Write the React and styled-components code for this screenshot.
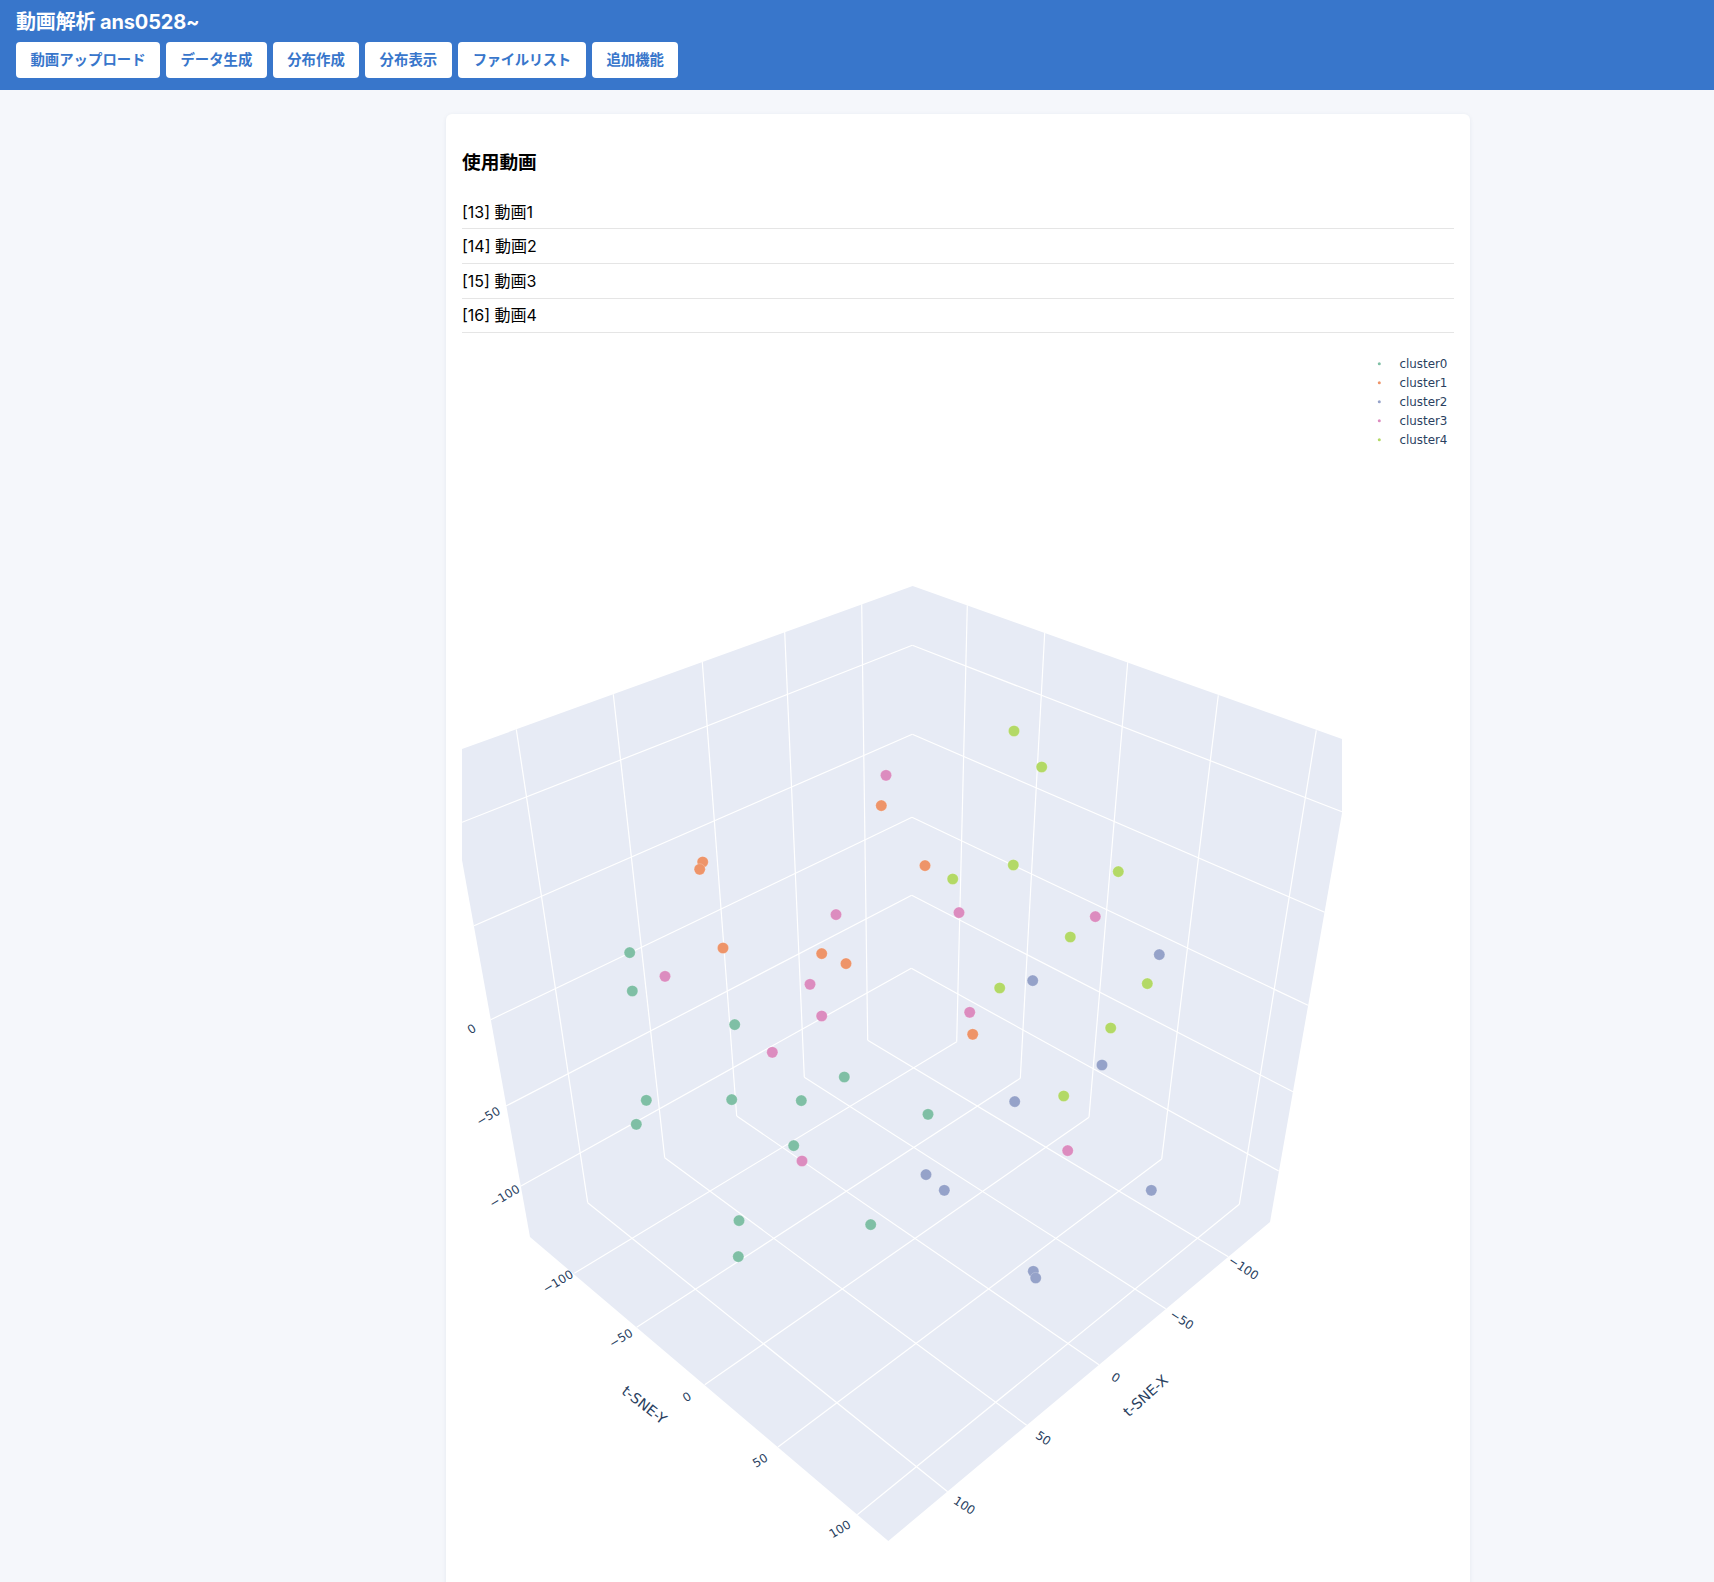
import React from "react";
import styled, { createGlobalStyle } from "styled-components";

const GlobalStyle = createGlobalStyle`
  html, body { margin: 0; padding: 0; background: #f5f7fb; }
  body { font-family: Inter, "Noto Sans CJK JP", sans-serif; }
`;

const Page = styled.div`
  height: 1582px;
  overflow: hidden;
  background: #f5f7fb;
`;
const Header = styled.header`
  height: 90px;
  box-sizing: border-box;
  padding: 9px 16px 0;
  background: #3876cb;
  color: #fff;
`;
const Title = styled.h1`
  margin: 0 0 6px;
  height: 27px;
  font-size: 20px;
  line-height: 27px;
  font-weight: 700;
  letter-spacing: -0.15px;
`;
const Nav = styled.nav`
  display: flex;
  gap: 6px;
`;
const NavButton = styled.button`
  height: 36px;
  width: ${(p) => p.$w}px;
  padding: 0 0 4px;
  border: 0;
  border-radius: 4px;
  background: #fff;
  color: #3876cb;
  font-family: inherit;
  font-size: 14.4px;
  font-weight: 700;
  letter-spacing: ${(p) => p.$ls || 0}px;
  white-space: nowrap;
`;
const Main = styled.main`
  padding: 24px 244px 0 446px;
`;
const Card = styled.section`
  box-sizing: border-box;
  padding: 0 16px 16px;
  background: #fff;
  border-radius: 6px;
  box-shadow: 0 1px 4px rgba(40, 60, 100, 0.08);
  display: flow-root;
`;
const Heading = styled.h3`
  margin: 34.7px 0 19.1px;
  font-size: 18.72px;
  line-height: 27px;
  font-weight: 700;
  color: #000;
`;
const VideoList = styled.ul`
  list-style: none;
  margin: 0;
  padding: 0;
`;
const VideoRow = styled.li`
  box-sizing: border-box;
  height: 34.6px;
  line-height: 24px;
  padding-top: 4.8px;
  font-size: 16px;
  color: #000;
  border-bottom: 1px solid #e5e5e5;
`;
const Plot = styled.svg`
  display: block;
  width: 992px;
  height: 1260px;
`;
const Tick = styled.text`
  font-family: "DejaVu Sans", Verdana, sans-serif;
  font-size: 12px;
  fill: #2a3f5f;
  text-anchor: middle;
  dominant-baseline: central;
`;
const AxisTitle = styled(Tick)`
  font-size: 14.4px;
`;
const LegendText = styled.text`
  font-family: "DejaVu Sans", Verdana, sans-serif;
  font-size: 11.9px;
  fill: #2a3f5f;
  dominant-baseline: central;
`;
const GridLine = styled.line`
  stroke: #fff;
  stroke-width: 1.2;
`;
const Marker = styled.circle`
  fill: ${(p) => p.$c};
  stroke: rgba(255, 255, 255, 0.35);
  stroke-width: 0.6;
`;

const C = { g: "#7fbfa5", o: "#ee9469", b: "#95a2c9", p: "#dc8cbf", l: "#b3d966" };

const silhouette =
  "462,749 912.7,586 1342,739 1342,813 1270,1222 888.3,1541 530,1237 462,860";

const grid = [
  // left wall verticals
  [516.3, 729.3, 587.7, 1202.7], [613.3, 694.3, 664.7, 1157.7], [702.3, 662, 736.7, 1116],
  [784.7, 632, 804.3, 1077.3], [861.7, 604.3, 867.7, 1040.3],
  // right wall verticals
  [967.3, 605.3, 956.7, 1041.7], [1044.7, 633, 1020.3, 1078.3], [1127.7, 662.3, 1089, 1117.3],
  [1218.3, 695.3, 1161.7, 1159], [1316.3, 730.3, 1239.3, 1204.3],
  // left wall levels
  [462, 822.3, 912.3, 645.3], [474, 925.7, 912.3, 734.3], [490.7, 1019.7, 912, 817.3],
  [506, 1106, 911.7, 895.3], [521, 1186, 911.3, 968.3],
  // right wall levels
  [912.3, 645.3, 1342, 811.7], [912.3, 734.3, 1324.7, 912.3], [912, 817.3, 1308, 1005.3],
  [911.7, 895.3, 1293, 1091.7], [911.3, 968.3, 1278.7, 1171],
  // floor
  [867.7, 1040.3, 1228.3, 1256.7], [804.3, 1077.3, 1165.7, 1308.7], [736.7, 1116, 1099, 1364.7],
  [664.7, 1157.7, 1026.7, 1425.3], [587.7, 1202.7, 947.7, 1491.7],
  [956.7, 1041.7, 574.3, 1273.3], [1020.3, 1078.3, 636.7, 1327.3], [1089, 1117.3, 704.7, 1384.7],
  [1161.7, 1159, 778, 1447], [1239.3, 1204.3, 857.3, 1514.7],
];

const points = [
  [886, 775, "p"], [881.3, 805.3, "o"], [925, 865.3, "o"], [702.7, 861.7, "o"], [699.7, 869, "o"],
  [836, 914.3, "p"], [723, 947.7, "o"], [821.7, 953.3, "o"], [846, 963.3, "o"], [629.7, 952.3, "g"],
  [665, 976, "p"], [632.3, 990.7, "g"], [810, 984, "p"], [821.7, 1015.7, "p"], [734.7, 1024.3, "g"],
  [772.3, 1052, "p"], [844.3, 1076.7, "g"],
  [1014, 730.7, "l"], [1041.7, 766.7, "l"], [952.7, 878.7, "l"], [1013.3, 864.7, "l"], [1118.3, 871.3, "l"],
  [959, 912.3, "p"], [1095.3, 916.3, "p"], [1070.3, 936.7, "l"], [1159.3, 954.3, "b"], [1147.3, 983.3, "l"],
  [1032.7, 980.3, "b"], [999.7, 987.7, "l"], [969.7, 1012, "p"], [972.7, 1034, "o"], [1110.7, 1027.7, "l"],
  [1102, 1064.7, "b"],
  [646.3, 1100, "g"], [636.3, 1124, "g"], [731.7, 1099.3, "g"], [801.3, 1100.3, "g"], [928, 1114, "g"],
  [793.7, 1145.3, "g"], [802, 1160.7, "p"], [926, 1174.3, "b"], [739, 1220.3, "g"], [870.7, 1224.3, "g"],
  [738.3, 1256.3, "g"],
  [1014.7, 1101.3, "b"], [1063.7, 1095.7, "l"], [1067.7, 1150.3, "p"], [944.3, 1190, "b"], [1151.3, 1190, "b"],
  [1033.3, 1271, "b"], [1035.7, 1277.7, "b"],
];

const ticks = [
  ["0", 471.7, 1029, -31], ["−50", 488.3, 1116.3, -31], ["−100", 504.5, 1196.3, -31],
  ["−100", 558, 1281.7, -31], ["−50", 621, 1338.3, -31], ["0", 687, 1397, -31],
  ["50", 760.3, 1460.7, -31], ["100", 840, 1529.3, -31],
  ["−100", 1243.5, 1268, 33], ["−50", 1181.8, 1320, 33], ["0", 1115.7, 1377.7, 33],
  ["50", 1043.3, 1438.3, 33], ["100", 964.3, 1505.7, 33],
];

const legend = [
  ["cluster0", 364.3, "g"], ["cluster1", 383.3, "o"], ["cluster2", 402.3, "b"],
  ["cluster3", 421.3, "p"], ["cluster4", 440.3, "l"],
];

const buttons = [
  ["動画アップロード", 144], ["データ生成", 100.8], ["分布作成", 86.4], ["分布表示", 86.4],
  ["ファイルリスト", 128.4, -0.4], ["追加機能", 86.4],
];

const rows = ["[13] 動画1", "[14] 動画2", "[15] 動画3", "[16] 動画4"];

export default function App() {
  return (
    <Page>
      <GlobalStyle />
      <Header>
        <Title>動画解析 ans0528~</Title>
        <Nav>
          {buttons.map(([t, w, ls]) => (
            <NavButton key={t} $w={w} $ls={ls}>{t}</NavButton>
          ))}
        </Nav>
      </Header>
      <Main>
        <Card>
          <Heading>使用動画</Heading>
          <VideoList>
            {rows.map((r) => (
              <VideoRow key={r}>{r}</VideoRow>
            ))}
          </VideoList>
          <Plot viewBox="462 333 992 1260">
            <polygon points={silhouette} fill="#e7ebf5" />
            {grid.map(([x1, y1, x2, y2], i) => (
              <GridLine key={i} x1={x1} y1={y1} x2={x2} y2={y2} />
            ))}
            {points.map(([x, y, c], i) => (
              <Marker key={i} cx={x} cy={y + 0.3} r={5.6} $c={C[c]} />
            ))}
            {ticks.map(([t, x, y, a], i) => (
              <Tick key={i} x={x} y={y} transform={`rotate(${a} ${x} ${y})`}>{t}</Tick>
            ))}
            <AxisTitle x={644.3} y={1405} transform="rotate(38 644.3 1405)">t-SNE-Y</AxisTitle>
            <AxisTitle x={1145.7} y={1395.7} transform="rotate(-41.8 1145.7 1395.7)">t-SNE-X</AxisTitle>
            {legend.map(([t, y, c]) => (
              <g key={t}>
                <circle cx={1379.3} cy={y - 0.5} r={1.5} fill={C[c]} />
                <LegendText x={1399.4} y={y}>{t}</LegendText>
              </g>
            ))}
          </Plot>
        </Card>
      </Main>
    </Page>
  );
}
